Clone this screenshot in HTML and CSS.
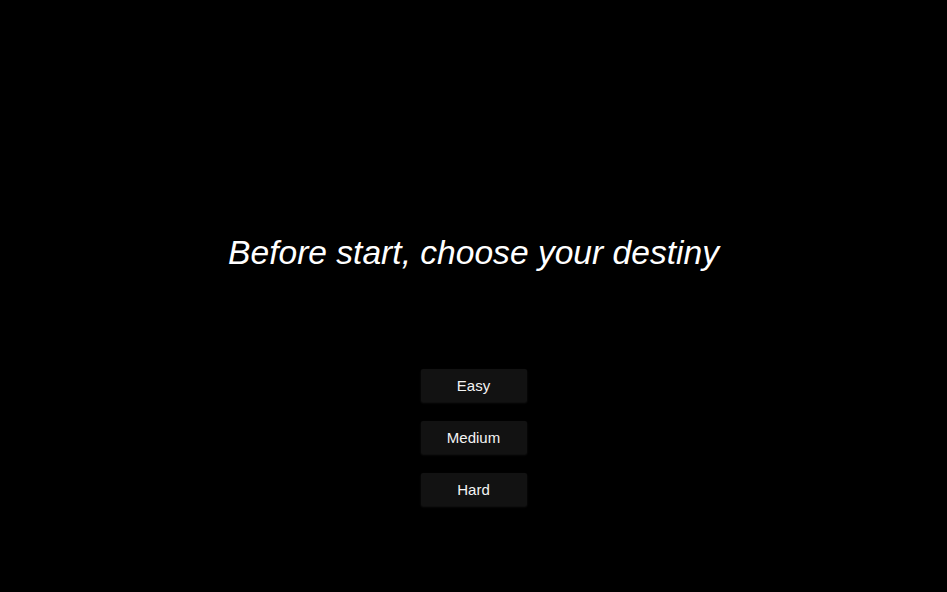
FILE: index.html
```html
<!DOCTYPE html>
<html>
<head>
<meta charset="utf-8">
<link rel="stylesheet" href="styles.css">
</head>
<body>
<main class="screen">
  <h1 class="title">Before start, choose your destiny</h1>
  <div class="choices">
    <button class="choice">Easy</button>
    <button class="choice">Medium</button>
    <button class="choice">Hard</button>
  </div>
</main>
</body>
</html>
```

FILE: styles.css
```css
html, body {
  margin: 0;
  padding: 0;
  background: #000;
  height: 100%;
}
.screen {
  display: flex;
  flex-direction: column;
  align-items: center;
  padding-top: 231px;
  font-family: "Liberation Sans", Arial, sans-serif;
}
.title {
  margin: 0;
  font-size: 33.6px;
  font-weight: normal;
  font-style: italic;
  color: #fff;
  line-height: 44px;
}
.choices {
  display: flex;
  flex-direction: column;
  gap: 19px;
  margin-top: 94px;
}
.choice {
  width: 106px;
  height: 33px;
  border: none;
  border-radius: 2px;
  background: #121212;
  color: #f4f4f4;
  font-family: "Liberation Sans", Arial, sans-serif;
  font-size: 15px;
  padding: 0;
  box-shadow: 0 1px 2px rgba(40,40,40,0.5);
}
```
